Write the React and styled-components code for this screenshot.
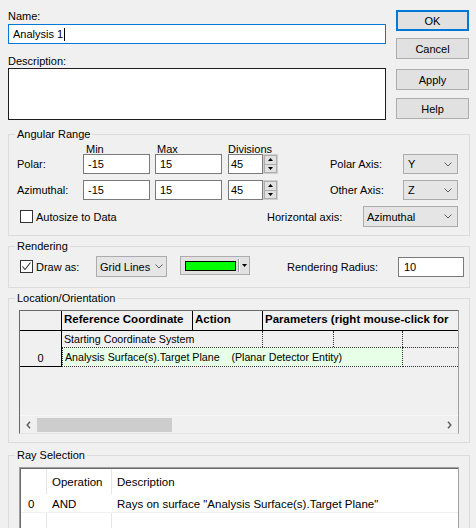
import React from 'react';
import styled, { createGlobalStyle } from 'styled-components';

const Global = createGlobalStyle`
  html, body { margin: 0; padding: 0; background: #f0f0f0; }
  body { font-family: "Liberation Sans", Arial, sans-serif; font-size: 11px; color: #000; }
  * { box-sizing: border-box; }
`;

const Dialog = styled.div`
  width: 476px;
  height: 528px;
  overflow: hidden;
  padding: 0 6px 0 8px;
  display: flex;
  flex-direction: column;
`;

const Top = styled.div`
  display: flex;
  flex: none;
`;

const MainFields = styled.div`
  width: 378px;
  display: flex;
  flex-direction: column;
`;

const FieldLabel = styled.label`
  display: block;
  margin-top: ${p => p.$mt}px;
  height: ${p => p.$h}px;
  line-height: ${p => p.$h}px;
`;

const TextBox = styled.div`
  flex: none;
  width: ${p => p.$w}px;
  height: ${p => p.$h || 20}px;
  margin-left: ${p => p.$ml || 0}px;
  border: 1px solid ${p => (p.$focus ? '#0078d7' : p.$dark ? '#1e1e1e' : '#7a7a7a')};
  background: #fff;
  padding: 0 ${p => (p.$pl ?? 5) - 1}px;
  display: flex;
  align-items: center;
  white-space: nowrap;
  overflow: hidden;
`;

const Caret = styled.span`
  display: inline-block;
  width: 1px;
  height: 13px;
  background: #000;
  margin-left: 1px;
`;

const ButtonColumn = styled.div`
  margin-left: 10px;
  width: 73px;
  display: flex;
  flex-direction: column;
`;

const PushButton = styled.button`
  width: 73px;
  height: 21px;
  margin-top: ${p => p.$mt}px;
  padding: 0;
  background: #e1e1e1;
  border: ${p => (p.$default ? '2px solid #0078d7' : '1px solid #adadad')};
  font: inherit;
  color: #000;
  display: flex;
  align-items: center;
  justify-content: center;
`;

const GroupBox = styled.fieldset`
  flex: none;
  margin: ${p => p.$mt}px 0 0 0;
  padding: 0;
  border: 1px solid #dcdcdc;
  min-width: 0;
`;

const GroupTitle = styled.legend`
  margin-left: 6px;
  padding: 0 2px;
  height: 13px;
  line-height: 13px;
  font-size: 11px;
`;

const GroupBody = styled.div`
  padding: ${p => p.$pad};
`;

const Row = styled.div`
  display: flex;
  align-items: center;
  height: ${p => p.$h}px;
  margin-top: ${p => p.$mt || 0}px;
`;

const HeadRow = styled.div`
  display: flex;
  height: 13px;
  line-height: 17px;
  white-space: nowrap;
`;

const Caption = styled.span`
  flex: none;
  width: ${p => (p.$w ? `${p.$w}px` : 'auto')};
  margin-left: ${p => p.$ml || 0}px;
  white-space: nowrap;
`;

const Combo = styled.div`
  flex: none;
  width: ${p => p.$w}px;
  height: ${p => p.$h || 20}px;
  margin-left: ${p => p.$ml || 0}px;
  background: #e5e5e5;
  border: 1px solid #acacac;
  display: flex;
  align-items: center;
  padding-left: ${p => p.$pl || 3}px;
  padding-right: ${p => p.$pr || 5}px;
  white-space: nowrap;
`;

const ComboText = styled.span`
  flex: 1;
`;

const SpinBox = styled.div`
  flex: none;
  display: flex;
`;

const Spin = styled.div`
  width: 15px;
  height: 20px;
  display: flex;
  flex-direction: column;
  border: 1px solid #cfcfcf;
  background: #f0f0f0;
`;

const SpinButton = styled.div`
  flex: 1;
  background: #e1e1e1;
  border: 1px solid #adadad;
  margin-top: ${p => (p.$down ? '-1px' : 0)};
  display: flex;
  align-items: center;
  justify-content: center;
`;

const CheckBox = styled.span`
  flex: none;
  width: 13px;
  height: 13px;
  margin-left: 3px;
  margin-right: 3px;
  border: 1px solid #333;
  background: #fff;
  display: flex;
  align-items: center;
  justify-content: center;
`;

const ColorButton = styled.div`
  flex: none;
  align-self: flex-start;
  width: 70px;
  height: 19px;
  margin-left: ${p => p.$ml}px;
  background: #e1e1e1;
  border: 1px solid #adadad;
  display: flex;
  align-items: center;
  padding-left: 4px;
`;

const Swatch = styled.span`
  width: 51px;
  height: 10px;
  border: 1px solid #000;
  background: ${p => p.$color};
`;

const SwatchSep = styled.span`
  width: 2px;
  height: 13px;
  margin-left: 2px;
  border-left: 1px solid #9a9a9a;
  border-right: 1px solid #fff;
`;

const SwatchArrow = styled.span`
  margin-left: 2px;
  display: flex;
`;

/* ---------- Location grid ---------- */
const GridFrame = styled.div`
  width: 440px;
  height: 124px;
  margin-left: 10px;
  border-top: 1px solid #696969;
  border-left: 1px solid #696969;
  border-right: 1px solid #a0a0a0;
  border-bottom: 1px solid #e3e3e3;
  background: #f0f0f0;
  display: flex;
  flex-direction: column;
  font-family: "Liberation Sans", Arial, sans-serif;
`;

const GridHeader = styled.div`
  flex: none;
  display: flex;
  height: 20px;
  border-bottom: 1px solid #000;
`;

const HeaderCell = styled.div`
  flex: ${p => (p.$w ? 'none' : '1')};
  width: ${p => (p.$w ? `${p.$w}px` : 'auto')};
  min-width: 0;
  height: 19px;
  border-right: ${p => (p.$last ? 'none' : '1px solid #000')};
  padding: 1px 0 0 2px;
  font-weight: bold;
  font-size: 11.5px;
  line-height: 15px;
  white-space: normal;
  word-break: keep-all;
  overflow: hidden;
`;

const GridBody = styled.div`
  flex: none;
  display: flex;
  height: 36px;
`;

const RowHead = styled.div`
  flex: none;
  width: 42px;
  border-right: 1px solid #000;
  border-bottom: 1px solid #000;
  display: flex;
  align-items: flex-end;
  justify-content: center;
  padding-bottom: 1px;
  font-size: 11px;
  line-height: 14px;
`;

const RowCells = styled.div`
  flex: 1;
  display: flex;
  flex-direction: column;
  font-size: 10.67px;
`;

const CellLine = styled.div`
  display: flex;
  height: ${p => p.$h}px;
`;

const DataCell = styled.div`
  flex: ${p => (p.$w ? 'none' : '1')};
  width: ${p => (p.$w ? `${p.$w}px` : 'auto')};
  height: 100%;
  background: ${p => p.$bg || 'transparent'};
  border-right: ${p => (p.$r ? '1px dotted #333' : 'none')};
  border-top: ${p => (p.$t ? '1px dotted #333' : 'none')};
  border-bottom: ${p => (p.$b ? '1px dotted #333' : 'none')};
  border-left: ${p => (p.$l ? '1px dotted #333' : 'none')};
  padding-left: 2px;
  display: flex;
  align-items: center;
  white-space: pre;
  overflow: hidden;
`;

const GridFill = styled.div`
  flex: 1;
`;

const HScroll = styled.div`
  flex: none;
  height: 18px;
  display: flex;
  align-items: center;
  border-top: 1px solid #f7f7f7;
`;

const ScrollArrow = styled.div`
  flex: none;
  width: 17px;
  height: 100%;
  display: flex;
  align-items: center;
  justify-content: center;
`;

const ScrollThumb = styled.div`
  flex: none;
  width: 135px;
  height: 14px;
  background: #cdcdcd;
`;

const ScrollTrack = styled.div`
  flex: 1;
`;

/* ---------- Ray table ---------- */
const RayTable = styled.div`
  width: 440px;
  height: 80px;
  margin-left: 10px;
  background: #fff;
  border: 1px solid #a0a0a0;
  box-shadow: inset 1px 1px 0 #696969;
  padding: 1px 0 0 1px;
  font-size: 11.5px;
  display: flex;
  flex-direction: column;
`;

const RayRow = styled.div`
  flex: none;
  display: flex;
  height: ${p => p.$h}px;
  border-bottom: ${p => (p.$line ? '1px solid #f0f0f0' : 'none')};
`;

const RayCell = styled.div`
  flex: ${p => (p.$w ? 'none' : '1')};
  width: ${p => (p.$w ? `${p.$w}px` : 'auto')};
  border-right: ${p => (p.$sep ? '1px solid #e5e5e5' : 'none')};
  padding: ${p => p.$pt || 0}px 0 0 ${p => p.$pl}px;
  display: flex;
  align-items: center;
  white-space: nowrap;
  overflow: hidden;
`;

const Chevron = () => (
  <svg width="8" height="5" viewBox="0 0 8 5">
    <path d="M0.5 0.5 L4 4 L7.5 0.5" fill="none" stroke="#606060" strokeWidth="1" />
  </svg>
);

const TriDown = () => (
  <svg width="5" height="3" viewBox="0 0 5 3">
    <path d="M0 0 H5 L2.5 3 Z" fill="#000" />
  </svg>
);

const TriUp = () => (
  <svg width="5" height="3" viewBox="0 0 5 3">
    <path d="M0 3 H5 L2.5 0 Z" fill="#000" />
  </svg>
);

const CheckMark = () => (
  <svg width="11" height="11" viewBox="0 0 11 11">
    <path d="M1.5 5.5 L4 8.5 L9.5 1.5" fill="none" stroke="#333" strokeWidth="1.1" />
  </svg>
);

const ArrowLeft = () => (
  <svg width="5" height="8" viewBox="0 0 5 8">
    <path d="M4 0.8 L1.2 4 L4 7.2" fill="none" stroke="#606060" strokeWidth="1.5" />
  </svg>
);

const ArrowRight = () => (
  <svg width="5" height="8" viewBox="0 0 5 8">
    <path d="M1 0.8 L3.8 4 L1 7.2" fill="none" stroke="#606060" strokeWidth="1.5" />
  </svg>
);

const SpinEdit = ({ value, ml }) => (
  <SpinBox>
    <TextBox $w={35} $pl={3} $ml={ml}>{value}</TextBox>
    <Spin>
      <SpinButton><TriUp /></SpinButton>
      <SpinButton $down><TriDown /></SpinButton>
    </Spin>
  </SpinBox>
);

export default function App() {
  return (
    <>
      <Global />
      <Dialog>
        <Top>
          <MainFields>
            <FieldLabel $mt={9} $h={15}>Name:</FieldLabel>
            <TextBox $w={378} $focus>
              Analysis 1<Caret />
            </TextBox>
            <FieldLabel $mt={10} $h={14}>Description:</FieldLabel>
            <TextBox $w={378} $h={52} $dark />
          </MainFields>
          <ButtonColumn>
            <PushButton $mt={10} $default>OK</PushButton>
            <PushButton $mt={7}>Cancel</PushButton>
            <PushButton $mt={10}>Apply</PushButton>
            <PushButton $mt={8}>Help</PushButton>
          </ButtonColumn>
        </Top>

        <GroupBox $mt={8}>
          <GroupTitle>Angular Range</GroupTitle>
          <GroupBody $pad="0 11px 8px 8px">
            <HeadRow>
              <Caption $w={69} />
              <Caption $w={71}>Min</Caption>
              <Caption $w={71}>Max</Caption>
              <Caption>Divisions</Caption>
            </HeadRow>
            <Row $h={20}>
              <Caption $w={66}>Polar:</Caption>
              <TextBox $w={67}>-15</TextBox>
              <TextBox $w={67} $ml={5}>15</TextBox>
              <SpinEdit value="45" ml={6} />
              <Caption $w={73} $ml={52}>Polar Axis:</Caption>
              <Combo $w={55} $pl={4}>
                <ComboText>Y</ComboText>
                <Chevron />
              </Combo>
            </Row>
            <Row $h={20} $mt={6}>
              <Caption $w={66}>Azimuthal:</Caption>
              <TextBox $w={67}>-15</TextBox>
              <TextBox $w={67} $ml={5}>15</TextBox>
              <SpinEdit value="45" ml={6} />
              <Caption $w={73} $ml={52}>Other Axis:</Caption>
              <Combo $w={55} $pl={4}>
                <ComboText>Z</ComboText>
                <Chevron />
              </Combo>
            </Row>
            <Row $h={21} $mt={6}>
              <CheckBox />
              <Caption $w={231}>Autosize to Data</Caption>
              <Caption $w={96}>Horizontal axis:</Caption>
              <Combo $w={95} $h={21} $pl={3}>
                <ComboText>Azimuthal</ComboText>
                <Chevron />
              </Combo>
            </Row>
          </GroupBody>
        </GroupBox>

        <GroupBox $mt={4}>
          <GroupTitle>Rendering</GroupTitle>
          <GroupBody $pad="3px 0 10px 8px">
            <Row $h={21}>
              <CheckBox>
                <CheckMark />
              </CheckBox>
              <Caption $w={60}>Draw as:</Caption>
              <Combo $w={71} $h={21} $pl={3} $pr={3}>
                <ComboText>Grid Lines</ComboText>
                <Chevron />
              </Combo>
              <ColorButton $ml={13}>
                <Swatch $color="#00ff00" />
                <SwatchSep />
                <SwatchArrow>
                  <TriDown />
                </SwatchArrow>
              </ColorButton>
              <Caption $w={111} $ml={37}>Rendering Radius:</Caption>
              <TextBox $w={66} $pl={6}>10</TextBox>
            </Row>
          </GroupBody>
        </GroupBox>

        <GroupBox $mt={4}>
          <GroupTitle>Location/Orientation</GroupTitle>
          <GroupBody $pad="5px 0 8px 0">
            <GridFrame>
              <GridHeader>
                <HeaderCell $w={42} />
                <HeaderCell $w={131}>Reference Coordinate System</HeaderCell>
                <HeaderCell $w={70}>Action</HeaderCell>
                <HeaderCell $last>Parameters (right mouse-click for options)</HeaderCell>
              </GridHeader>
              <GridBody>
                <RowHead>0</RowHead>
                <RowCells>
                  <CellLine $h={16}>
                    <DataCell $w={201} $r>Starting Coordinate System</DataCell>
                    <DataCell $w={71} $r />
                    <DataCell $w={69} $r />
                    <DataCell />
                  </CellLine>
                  <CellLine $h={20}>
                    <DataCell $w={341} $bg="#e6ffe6" $t $b $l $r>
                      {'Analysis Surface(s).Target Plane    (Planar Detector Entity)'}
                    </DataCell>
                    <DataCell $t $b />
                  </CellLine>
                </RowCells>
              </GridBody>
              <GridFill />
              <HScroll>
                <ScrollArrow>
                  <ArrowLeft />
                </ScrollArrow>
                <ScrollThumb />
                <ScrollTrack />
                <ScrollArrow>
                  <ArrowRight />
                </ScrollArrow>
              </HScroll>
            </GridFrame>
          </GroupBody>
        </GroupBox>

        <GroupBox $mt={6}>
          <GroupTitle>Ray Selection</GroupTitle>
          <GroupBody $pad="5px 0 8px 0">
            <RayTable>
              <RayRow $h={25}>
                <RayCell $w={26} $pl={7} $sep />
                <RayCell $w={65} $pl={5} $sep>Operation</RayCell>
                <RayCell $pl={5}>Description</RayCell>
              </RayRow>
              <RayRow $h={19} $line>
                <RayCell $w={26} $pl={7} $pt={1}>0</RayCell>
                <RayCell $w={65} $pl={5} $pt={1}>AND</RayCell>
                <RayCell $pl={5} $pt={1}>Rays on surface "Analysis Surface(s).Target Plane"</RayCell>
              </RayRow>
              <RayRow $h={30}>
                <RayCell $w={26} $pl={7} $sep />
                <RayCell $w={65} $pl={5} $sep />
                <RayCell $pl={5} />
              </RayRow>
            </RayTable>
          </GroupBody>
        </GroupBox>
      </Dialog>
    </>
  );
}
